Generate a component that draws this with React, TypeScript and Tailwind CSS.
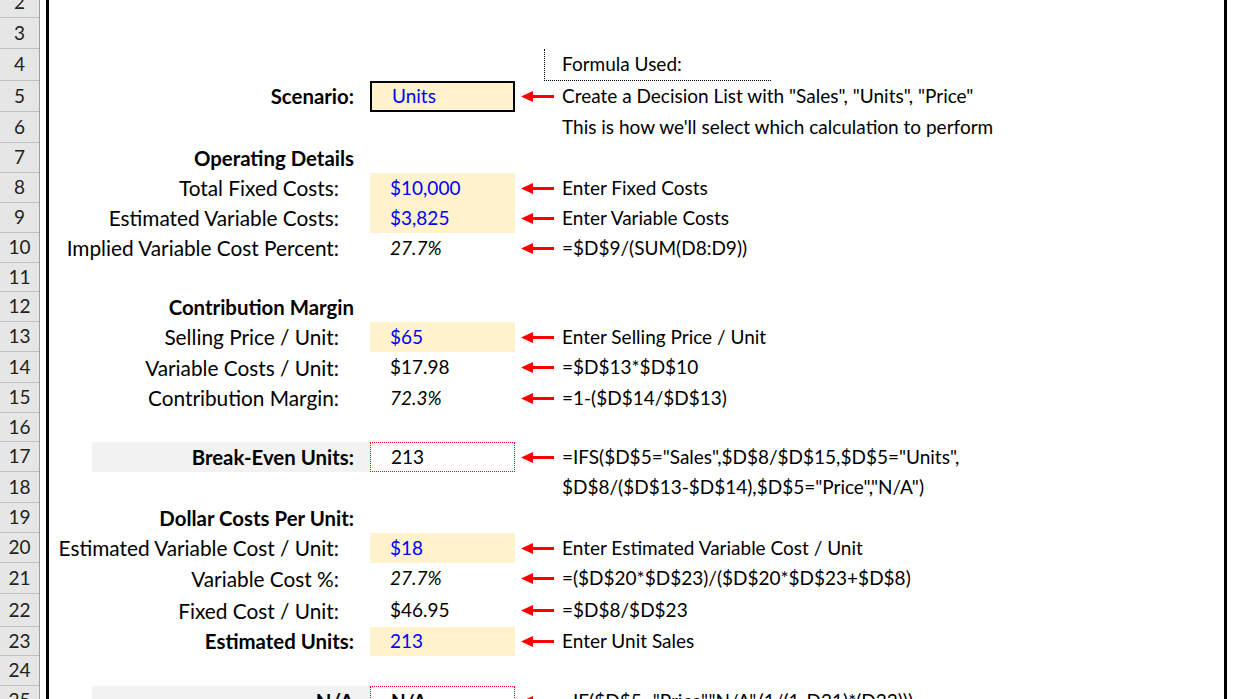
import React from 'react';

type Row = {
  n: number;
  h: string;
  label?: string;
  bold?: boolean;
  grey?: boolean;
  value?: string;
  kind?: 'input' | 'plain' | 'italic' | 'scenario' | 'dotted';
  arrow?: boolean;
  note?: string;
  formulaBox?: boolean;
};

const rows: Row[] = [
  { n: 2, h: 'h-[30px]' },
  { n: 3, h: 'h-[31px]' },
  { n: 4, h: 'h-[32px]', formulaBox: true },
  { n: 5, h: 'h-[31px]', label: 'Scenario:', bold: true, value: 'Units', kind: 'scenario', arrow: true, note: 'Create a Decision List with "Sales", "Units", "Price"' },
  { n: 6, h: 'h-[31px]', note: "This is how we'll select which calculation to perform" },
  { n: 7, h: 'h-[30px]', label: 'Operating Details', bold: true },
  { n: 8, h: 'h-[30px]', label: 'Total Fixed Costs:', value: '$10,000', kind: 'input', arrow: true, note: 'Enter Fixed Costs' },
  { n: 9, h: 'h-[30px]', label: 'Estimated Variable Costs:', value: '$3,825', kind: 'input', arrow: true, note: 'Enter Variable Costs' },
  { n: 10, h: 'h-[30px]', label: 'Implied Variable Cost Percent:', value: '27.7%', kind: 'italic', arrow: true, note: '=$D$9/(SUM(D8:D9))' },
  { n: 11, h: 'h-[29px]' },
  { n: 12, h: 'h-[30px]', label: 'Contribution Margin', bold: true },
  { n: 13, h: 'h-[30px]', label: 'Selling Price / Unit:', value: '$65', kind: 'input', arrow: true, note: 'Enter Selling Price / Unit' },
  { n: 14, h: 'h-[31px]', label: 'Variable Costs / Unit:', value: '$17.98', kind: 'plain', arrow: true, note: '=$D$13*$D$10' },
  { n: 15, h: 'h-[30px]', label: 'Contribution Margin:', value: '72.3%', kind: 'italic', arrow: true, note: '=1-($D$14/$D$13)' },
  { n: 16, h: 'h-[29px]' },
  { n: 17, h: 'h-[30px]', label: 'Break-Even Units:', bold: true, grey: true, value: '213', kind: 'dotted', arrow: true, note: '=IFS($D$5="Sales",$D$8/$D$15,$D$5="Units",' },
  { n: 18, h: 'h-[31px]', note: '$D$8/($D$13-$D$14),$D$5="Price","N/A")' },
  { n: 19, h: 'h-[30px]', label: 'Dollar Costs Per Unit:', bold: true },
  { n: 20, h: 'h-[30px]', label: 'Estimated Variable Cost / Unit:', value: '$18', kind: 'input', arrow: true, note: 'Enter Estimated Variable Cost / Unit' },
  { n: 21, h: 'h-[31px]', label: 'Variable Cost %:', value: '27.7%', kind: 'italic', arrow: true, note: '=($D$20*$D$23)/($D$20*$D$23+$D$8)' },
  { n: 22, h: 'h-[33px]', label: 'Fixed Cost / Unit:', value: '$46.95', kind: 'plain', arrow: true, note: '=$D$8/$D$23' },
  { n: 23, h: 'h-[29px]', label: 'Estimated Units:', bold: true, value: '213', kind: 'input', arrow: true, note: 'Enter Unit Sales' },
  { n: 24, h: 'h-[30px]' },
  { n: 25, h: 'h-[30px]', label: 'N/A', bold: true, grey: true, value: 'N/A', kind: 'dotted', arrow: true, note: '=IF($D$5="Price","N/A",(1/(1-D21)*(D22)))' },
];

const Arrow = () => (
  <svg width="33" height="11" viewBox="0 0 33 11" className="shrink-0">
    <polygon points="0,5.5 12,0 12,11" fill="#ff0000" />
    <rect x="10" y="4" width="23" height="3" fill="#ff0000" />
  </svg>
);

const valueClass = (kind?: Row['kind']) => {
  switch (kind) {
    case 'input':
      return 'bg-[#fff2cc] text-[#0000ff]';
    case 'scenario':
      return 'bg-[#fff2cc] text-[#0000ff] border-2 border-black pl-[18px]';
    case 'italic':
      return 'italic';
    case 'dotted':
      return 'border border-dotted border-[#ff0000] pl-[19px] font-bold';
    default:
      return '';
  }
};

export default function App() {
  return (
    <div className="w-[1243px] h-[699px] overflow-hidden bg-white text-black font-['Lato','Liberation_Sans',sans-serif] text-[19px]">
      <div className="flex -mt-[12px]">
        {/* row headers */}
        <div className="w-[40px] flex flex-col bg-[#e6e6e6] border-r border-[#9e9e9e]">
          {rows.map((r) => (
            <div key={r.n} className={`${r.h} flex items-center justify-center border-b border-[#bfbfbf] text-[#222]`}>
              {r.n}
            </div>
          ))}
        </div>
        <div className="w-[6px]" />
        {/* sheet body */}
        <div className="w-[1181px] flex flex-col border-x-[3px] border-black">
          {rows.map((r) => (
            <div key={r.n} className={`${r.h} flex items-stretch`}>
              <div className="w-[43px]" />
              <div
                className={`w-[278px] flex items-center justify-end whitespace-nowrap ${
                  r.bold ? 'font-bold text-[20.4px] pr-[16px]' : 'text-[20.8px] pr-[31px]'
                } ${r.grey ? 'bg-[#f2f2f2]' : ''}`}
              >
                {r.label}
              </div>
              {r.formulaBox ? (
                <>
                  <div className="w-[174px]" />
                  <div className="w-[227px] flex items-center pl-[17px] border-l border-b border-dotted border-black">Formula Used:</div>
                </>
              ) : (
                <>
                  <div className={`w-[145px] flex items-center pl-[20px] whitespace-nowrap ${valueClass(r.kind)}`}>
                    {r.kind === 'dotted' ? <span className={r.n === 17 ? 'font-normal' : ''}>{r.value}</span> : r.value}
                  </div>
                  <div className="w-[47px] flex items-center pl-[6px]">{r.arrow && <Arrow />}</div>
                  <div className="flex items-center whitespace-nowrap">{r.note}</div>
                </>
              )}
            </div>
          ))}
        </div>
      </div>
    </div>
  );
}
